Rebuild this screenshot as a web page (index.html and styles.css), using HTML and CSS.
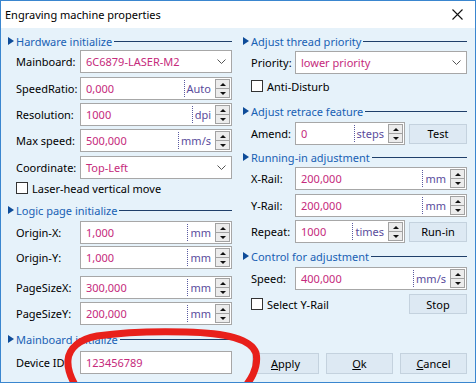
FILE: index.html
```html
<!DOCTYPE html>
<html>
  <head>
    <meta charset="UTF-8"/>
    <title>Engraving machine properties</title>
    <link rel="stylesheet" href="styles.css">
  </head>
  <body>
    <div class="window">
      <div class="titlebar">
        <span class="title">Engraving machine properties</span>
        <svg class="close" width="11" height="11" viewBox="0 0 11 11"><path d="M0.5 0.5 L10.5 10.5 M10.5 0.5 L0.5 10.5" stroke="#111" stroke-width="1.1"/></svg>
      </div>
      <div class="client">
        <!-- left side -->
        <div class="col left">
          <div class="grp"><i class="tri"></i><span>Hardware initialize</span><b class="rule"></b></div>
          <div class="row mt1"><label>Mainboard:</label>
            <div class="field"><span class="val">6C6879-LASER-M2</span><svg class="chev" width="9" height="5" viewBox="0 0 9 5"><polyline points="0.5,0.5 4.5,4.5 8.5,0.5" fill="none" stroke="#555"/></svg></div>
          </div>
          <div class="row mt4"><label>SpeedRatio:</label>
            <div class="field"><span class="val">0,000</span><span class="unit">Auto</span><span class="spin"><i class="sb"><b class="up"></b></i><i class="sb"><b class="dn"></b></i></span></div>
          </div>
          <div class="row"><label>Resolution:</label>
            <div class="field"><span class="val">1000</span><span class="unit">dpi</span><span class="spin"><i class="sb"><b class="up"></b></i><i class="sb"><b class="dn"></b></i></span></div>
          </div>
          <div class="row"><label>Max speed:</label>
            <div class="field"><span class="val">500,000</span><span class="unit">mm/s</span><span class="spin"><i class="sb"><b class="up"></b></i><i class="sb"><b class="dn"></b></i></span></div>
          </div>
          <div class="row mt4"><label>Coordinate:</label>
            <div class="field"><span class="val">Top-Left</span><svg class="chev" width="9" height="5" viewBox="0 0 9 5"><polyline points="0.5,0.5 4.5,4.5 8.5,0.5" fill="none" stroke="#555"/></svg></div>
          </div>
          <div class="check"><i class="box"></i><span>Laser-head vertical move</span></div>

          <div class="grp mt8"><i class="tri"></i><span>Logic page initialize</span><b class="rule"></b></div>
          <div class="row"><label>Origin-X:</label>
            <div class="field"><span class="val">1,000</span><span class="unit">mm</span><span class="spin"><i class="sb"><b class="up"></b></i><i class="sb"><b class="dn"></b></i></span></div>
          </div>
          <div class="row mt2"><label>Origin-Y:</label>
            <div class="field"><span class="val">1,000</span><span class="unit">mm</span><span class="spin"><i class="sb"><b class="up"></b></i><i class="sb"><b class="dn"></b></i></span></div>
          </div>
          <div class="row mt7"><label>PageSizeX:</label>
            <div class="field"><span class="val">300,000</span><span class="unit">mm</span><span class="spin"><i class="sb"><b class="up"></b></i><i class="sb"><b class="dn"></b></i></span></div>
          </div>
          <div class="row"><label>PageSizeY:</label>
            <div class="field"><span class="val">200,000</span><span class="unit">mm</span><span class="spin"><i class="sb"><b class="up"></b></i><i class="sb"><b class="dn"></b></i></span></div>
          </div>

          <div class="grp mt6"><i class="tri"></i><span>Mainboard initialize</span><b class="rule"></b></div>
          <div class="row mt4"><label>Device ID:</label>
            <div class="field"><span class="val">123456789</span></div>
          </div>
        </div>

        <!-- right side -->
        <div class="col right">
          <div class="grp"><i class="tri"></i><span>Adjust thread priority</span><b class="rule"></b></div>
          <div class="row mt2"><label>Priority:</label>
            <div class="field"><span class="val">lower priority</span><svg class="chev" width="9" height="5" viewBox="0 0 9 5"><polyline points="0.5,0.5 4.5,4.5 8.5,0.5" fill="none" stroke="#555"/></svg></div>
          </div>
          <div class="check mt6"><i class="box"></i><span>Anti-Disturb</span></div>

          <div class="grp mt11"><i class="tri"></i><span>Adjust retrace feature</span><b class="rule"></b></div>
          <div class="row"><label>Amend:</label>
            <div class="field"><span class="val">0</span><span class="unit">steps</span><span class="spin"><i class="sb"><b class="up"></b></i><i class="sb"><b class="dn"></b></i></span></div>
            <span class="btn">Test</span>
          </div>

          <div class="grp mt4"><i class="tri"></i><span>Running-in adjustment</span><b class="rule"></b></div>
          <div class="row mt2"><label>X-Rail:</label>
            <div class="field"><span class="val">200,000</span><span class="unit">mm</span><span class="spin"><i class="sb"><b class="up"></b></i><i class="sb"><b class="dn"></b></i></span></div>
          </div>
          <div class="row mt4"><label>Y-Rail:</label>
            <div class="field"><span class="val">200,000</span><span class="unit">mm</span><span class="spin"><i class="sb"><b class="up"></b></i><i class="sb"><b class="dn"></b></i></span></div>
          </div>
          <div class="row"><label>Repeat:</label>
            <div class="field"><span class="val">1000</span><span class="unit">times</span><span class="spin"><i class="sb"><b class="up"></b></i><i class="sb"><b class="dn"></b></i></span></div>
            <span class="btn">Run-in</span>
          </div>

          <div class="grp mt5"><i class="tri"></i><span>Control for adjustment</span><b class="rule"></b></div>
          <div class="row"><label>Speed:</label>
            <div class="field"><span class="val">400,000</span><span class="unit">mm/s</span><span class="spin"><i class="sb"><b class="up"></b></i><i class="sb"><b class="dn"></b></i></span></div>
          </div>
          <div class="checkrow">
            <div class="check nomt"><i class="box"></i><span>Select Y-Rail</span></div>
            <span class="btn">Stop</span>
          </div>

          <div class="actions">
            <span class="btn big"><u>A</u>pply</span>
            <span class="btn big"><u>O</u>k</span>
            <span class="btn big"><u>C</u>ancel</span>
          </div>
        </div>
      </div>

      <!-- red marker drawn over the screenshot -->
      <svg class="scribble" width="476" height="383" viewBox="0 0 476 383">
        <path d="M238 394 C251 382, 259 367, 256 353 C251 339, 226 333, 186 332 C150 331, 118 333, 97 336 C80 339, 69 348, 68 360 C67 372, 73 383, 81 394" fill="none" stroke="#e8201b" stroke-width="7" stroke-linecap="round" stroke-linejoin="round"/>
      </svg>
    </div>
  </body>
</html>
```

FILE: styles.css
```css
body {
  margin: 0;
  background-color: #ffffff;
  font-family: "Noto Sans", "Liberation Sans", sans-serif;
  font-size: 11px;
  color: #000000;
}

.window {
  position: relative;
  width: 476px;
  height: 383px;
  box-sizing: border-box;
  border: 1px solid #3a86cf;
  display: flex;
  flex-direction: column;
  background-color: #e6f2fa;
  overflow: hidden;
}

.titlebar {
  height: 27px;
  flex: none;
  background-color: #ffffff;
  display: flex;
  align-items: center;
  padding-left: 4px;
}

.title {
  flex: 1;
  margin-top: -1px;
}

.close {
  margin-right: 12px;
}

.client {
  flex: 1;
  display: flex;
  gap: 11px;
  padding: 5px 8px 8px 7px;
}

.col {
  width: 224px;
  display: flex;
  flex-direction: column;
}

/* group headers */
.grp {
  height: 16px;
  display: flex;
  align-items: center;
  color: #1861b4;
}

.tri {
  width: 0;
  height: 0;
  border-left: 6px solid #0e4c99;
  border-top: 4.5px solid transparent;
  border-bottom: 4.5px solid transparent;
  margin-right: 2px;
}

.rule {
  flex: 1;
  height: 1px;
  background-color: #1f3f6a;
  margin-left: 2px;
}

/* field rows */
.row {
  display: flex;
  align-items: center;
  height: 23px;
  margin-top: 3px;
}

.row label {
  flex: none;
  box-sizing: border-box;
  padding-left: 8px;
}

.left .row label {
  width: 72px;
}

.right .row label {
  width: 52px;
}

.field {
  flex: 1;
  height: 100%;
  box-sizing: border-box;
  border: 1px solid #a7a7a7;
  background-color: #ffffff;
  display: flex;
  align-items: center;
}

.val {
  flex: 1;
  padding-left: 5px;
  color: #c52a7c;
}

.chev {
  margin-right: 5px;
}

.unit {
  align-self: stretch;
  display: flex;
  align-items: center;
  margin: 2px 0;
  padding: 0 4px 0 2px;
  border-left: 1px dotted #5a5aa0;
  color: #5a4c9c;
}

.spin {
  align-self: stretch;
  display: flex;
  flex-direction: column;
  width: 15px;
  margin: 1px 1px 1px 0;
}

.sb {
  flex: 1;
  box-sizing: border-box;
  border: 1px solid #a2a2a2;
  background-color: #ececec;
  display: flex;
  align-items: center;
  justify-content: center;
}

.sb + .sb {
  border-top: none;
}

.up {
  border-left: 3px solid transparent;
  border-right: 3px solid transparent;
  border-bottom: 3px solid #111111;
}

.dn {
  border-left: 3px solid transparent;
  border-right: 3px solid transparent;
  border-top: 3px solid #111111;
}

/* checkboxes */
.check {
  height: 12px;
  margin-top: 3px;
  display: flex;
  align-items: center;
  gap: 4px;
  padding-left: 8px;
}

.box {
  width: 12px;
  height: 12px;
  box-sizing: border-box;
  border: 1px solid #333333;
  background-color: #ffffff;
}

.checkrow {
  height: 20px;
  margin-top: 4px;
  display: flex;
  align-items: center;
  justify-content: space-between;
}

.checkrow .check {
  margin-top: 0;
}

/* buttons */
.btn {
  flex: none;
  width: 58px;
  height: 20px;
  box-sizing: border-box;
  margin-left: 4px;
  border: 1px solid #c4d2de;
  background-color: #dde9f3;
  display: flex;
  align-items: center;
  justify-content: center;
}

.actions {
  margin-top: auto;
  display: flex;
  justify-content: flex-end;
  gap: 7px;
}

.btn.big {
  width: 67px;
  height: 21px;
  margin-left: 0;
}

/* spacing tweaks */
.mt1 { margin-top: 1px; }
.mt2 { margin-top: 2px; }
.mt4 { margin-top: 4px; }
.mt5 { margin-top: 5px; }
.mt6 { margin-top: 6px; }
.mt7 { margin-top: 7px; }
.mt8 { margin-top: 8px; }
.mt11 { margin-top: 11px; }

.scribble {
  position: absolute;
  left: -1px;
  top: -1px;
  pointer-events: none;
}
```
